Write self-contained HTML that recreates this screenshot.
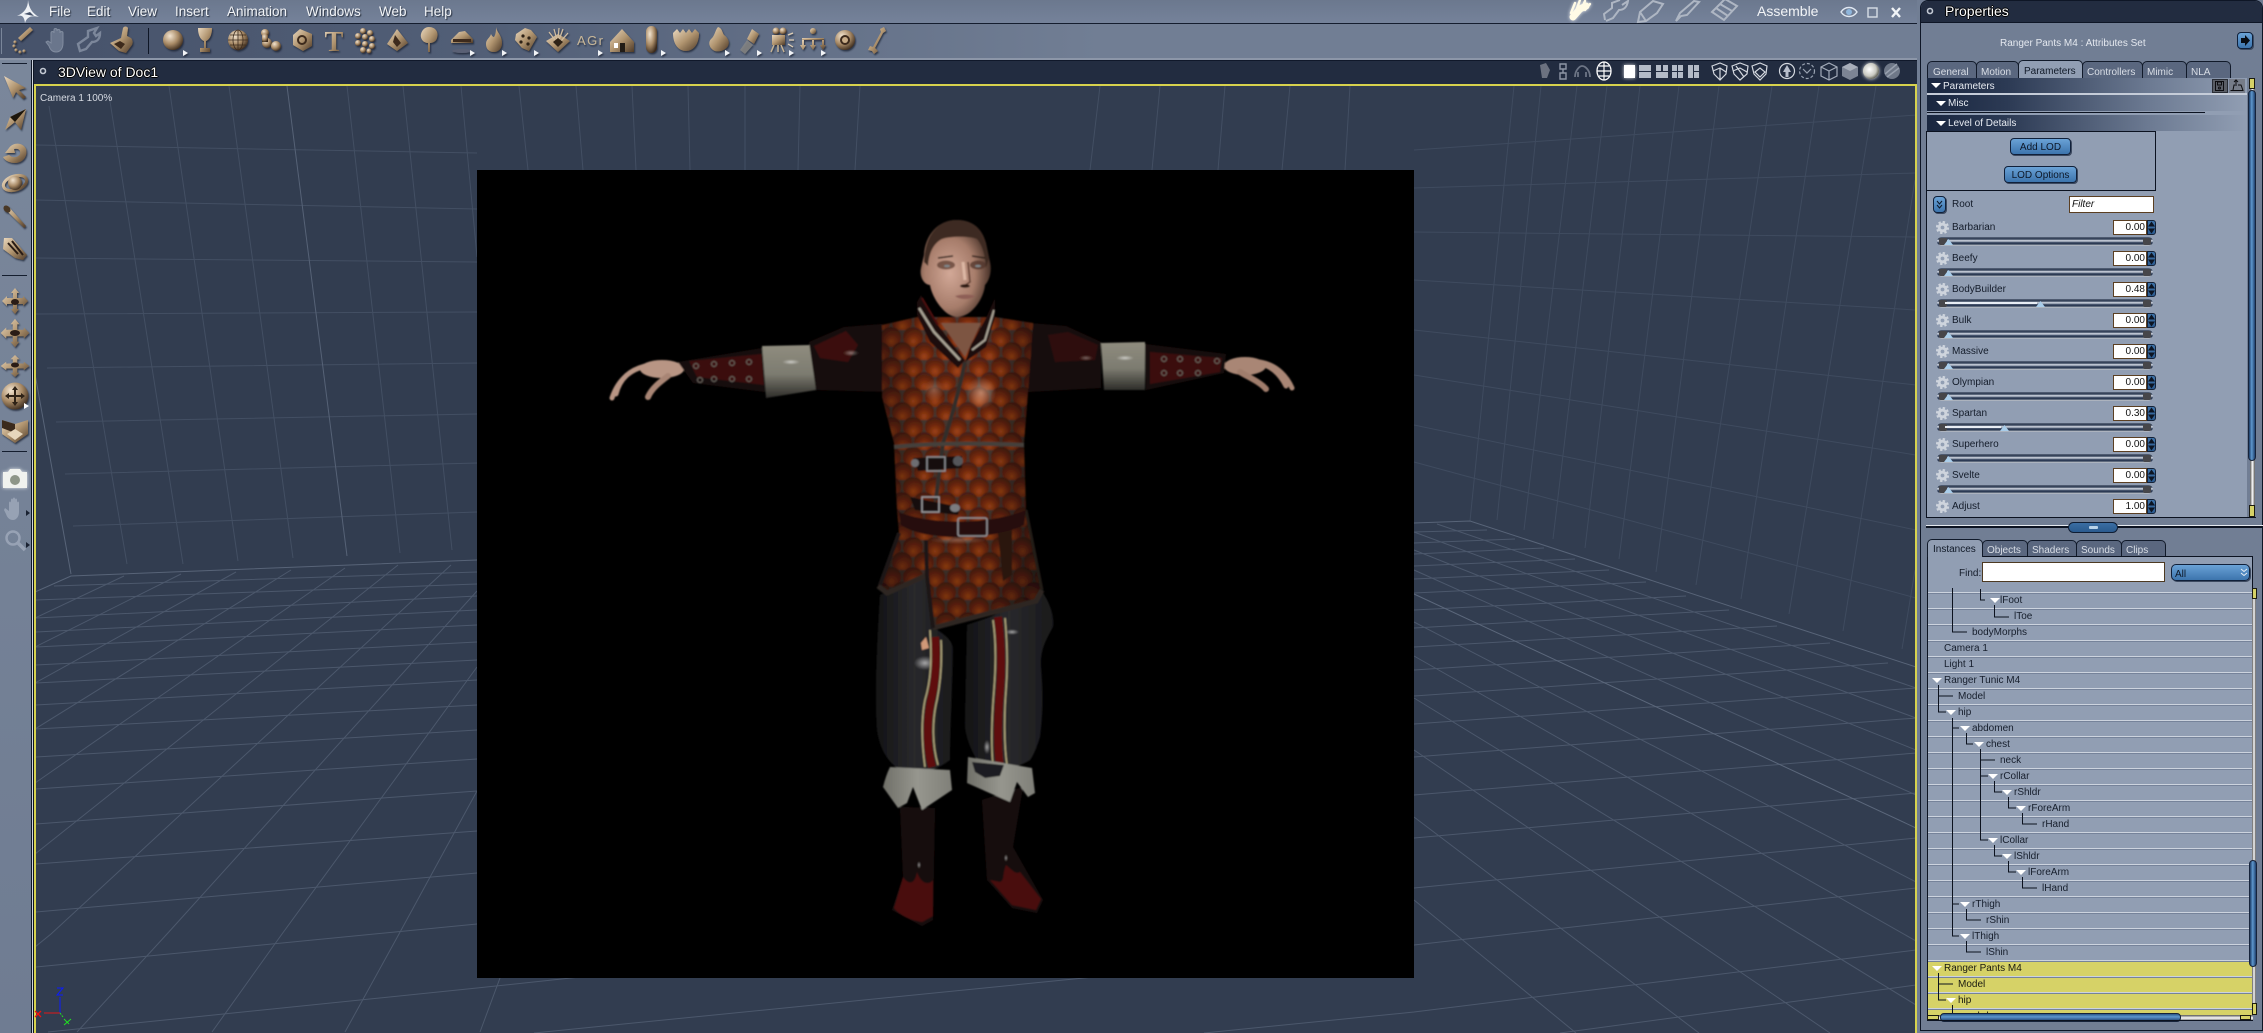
<!DOCTYPE html>
<html><head><meta charset="utf-8"><title>Carrara</title>
<style>
html,body{margin:0;padding:0;background:#717e94}
#r{position:relative;width:2263px;height:1033px;overflow:hidden;background:#717e94;font-family:"Liberation Sans",sans-serif}
#r div,#r span,#r svg{position:absolute}
.m{top:2px;font-size:13.5px;line-height:19px;color:#f2f4f7;text-shadow:1px 1px 1px #27303f;white-space:nowrap}
.t{font-size:10px;line-height:16px;white-space:nowrap;color:#141c2a}
.w{color:#fff;font-size:14px;line-height:18px;white-space:nowrap;text-shadow:-1px 0 0 #000,1px 0 0 #000,0 -1px 0 #000,0 1px 0 #000}
.tab{top:61px;height:17px;background:#5a677f;border:1px solid #111a2a;border-bottom:0;border-radius:5px 5px 0 0;box-sizing:border-box;color:#d9dee6;font-size:10px;line-height:21px;padding-left:4px;white-space:nowrap}
.tab.a{background:#919eb3;color:#111a28;top:60px;height:18px;z-index:2;padding-left:5px}
.hd{left:1927px;height:16px;background:linear-gradient(90deg,#1a2740 0,#2c3a54 25%,#6d7b93 70%,#919eb3 100%);color:#e8ecf2;font-size:10px;line-height:16px;white-space:nowrap}
.tri{width:0;height:0;border-left:5px solid transparent;border-right:5px solid transparent;border-top:5px solid #fff}
.btn{background:linear-gradient(#6aa2d6,#3c74ad);border:1px solid #10203a;border-radius:4px;box-shadow:1px 1px 0 #3d4a60;color:#0d1828;font-size:10px;text-align:center;box-sizing:border-box;line-height:17px}
.in{left:2113px;width:34px;height:15px;background:#fff;border:1px solid #5b3f22;box-sizing:border-box;font-size:10px;line-height:14px;text-align:right;padding-right:1px;color:#111}
.sp{left:2147px;width:9px;height:15px;background:linear-gradient(#3f73a8,#2c5b90);border-radius:0 3px 3px 0;border:1px solid #142238;box-sizing:border-box}
.sl{left:1937px;width:216px;height:9px;border-radius:5px;background:linear-gradient(#5a667b 0,#2a3850 22%,#d7dde8 42%,#1e2e4a 66%,#39465c 78%,#d3d8e0 100%)}
.cap{width:8px;height:7px;top:1px;background:#46464a;border-radius:2px}
.f{left:8px;top:3px;height:2px;background:#e8edf4}
.th{top:2px;width:9px;height:6px;background:#a9cdea;clip-path:polygon(50% 0,100% 100%,0 100%)}
#tree{left:1928px;top:592px;width:324px;height:424px;overflow:hidden;background:#919eb3}
#tree div{position:absolute;left:0;width:324px;height:16px;box-sizing:border-box;border-top:1px solid #ccd3de;box-shadow:inset 0 1px 0 #76839a;font-size:10px;line-height:16px;color:#161e2c;white-space:nowrap}
#tree div.y{background:#d6d267;color:#1a1a10}
#tree span.n{position:absolute;top:0}
#tree span.tr{position:absolute;top:5px;width:0;height:0;border-left:5px solid transparent;border-right:5px solid transparent;border-top:5px solid #fff}
</style></head><body>
<div id="r">
<!-- title bar -->
<div style="left:0;top:0;width:1919px;height:23px;background:linear-gradient(#6b788e,#75829a)"></div>
<div style="left:0;top:23px;width:1919px;height:1px;background:#141d2e"></div>
<div style="left:0;top:24px;width:1919px;height:34px;background:linear-gradient(90deg,#46526a 0,#525f77 500px,#66738a 850px,#717e94 1100px)"></div>
<div style="left:0;top:58px;width:1919px;height:2px;background:#8c96a8"></div>
<div class="m" style="left:49px">File</div><div class="m" style="left:87px">Edit</div><div class="m" style="left:128px">View</div><div class="m" style="left:175px">Insert</div><div class="m" style="left:227px">Animation</div><div class="m" style="left:306px">Windows</div><div class="m" style="left:379px">Web</div><div class="m" style="left:424px">Help</div>
<div class="m" style="left:1757px;font-size:14px;top:2px;text-shadow:none">Assemble</div>
<!-- left toolbar -->
<div style="left:0;top:60px;width:31px;height:973px;background:linear-gradient(#7a879b,#6f7c92)"></div>
<div style="left:31px;top:60px;width:1px;height:973px;background:#0f1726"></div>
<div style="left:32px;top:60px;width:1px;height:973px;background:#cfd5de"></div>
<div style="left:33px;top:60px;width:1px;height:973px;background:#0f1726"></div>
<!-- 3D title -->
<div style="left:34px;top:60px;width:1885px;height:24px;background:#222c40;border-top:1px solid #10182a;box-sizing:border-box"></div>
<div class="w" style="left:58px;top:63px">3DView of Doc1</div>
<!-- viewport -->
<div style="left:34px;top:84px;width:1883px;height:949px;background:#323d50;box-shadow:inset 0 2px 0 #d7d24d,inset 2px 0 0 #d7d24d,inset -2px 0 0 #d7d24d"></div>
<svg style="left:36px;top:86px" width="1879" height="947" viewBox="36 86 1879 947" fill="none" stroke="#4c586c" stroke-width="1">
<g stroke="#434f63">
<path d="M49 106L127 564M109 95L183 564M169 86L238 561M229 86L293 558M347 86L400 553M403 86L452 550M461 86L477 257M519 86L528 170M576 86L583 170M632 86L636 170M688 86L690 170M745 86L745 170M800 86L798 170M860 86L855 170M1100 86L1090 170M1160 86L1152 170M1225 86L1218 170M1290 86L1282 170M1350 86L1345 170"/>
<path d="M36 145L477 153M36 200L477 209M36 258L477 262M36 314L477 312M47 368L477 363M56 422L477 414M65 474L477 463M73 526L477 512"/>
</g>
<g stroke="#3f4b5f">
<path d="M1514 86L1470 521M1541 86L1497 520M1577 86L1524 530M1607 86L1553 539M1640 86L1585 548M1679 86L1619 559M1719 86L1656 572M1772 86L1696 585M1819 86L1741 599M1876 86L1789 614M1915 180L1843 631M1915 570L1902 649"/>
<path d="M1414 462L1916 598M1414 425L1916 530M1414 375L1916 455M1414 330L1916 385M1414 280L1916 310M1414 232L1916 237M1414 188L1916 173M1414 150L1916 115"/>
</g>
<path stroke="#566276" d="M287 86L347 556"/>
<path stroke="#586478" d="M35 374L71 574M35 592L71 576L477 560L1414 523L1470 521L1916 667"/>
<path d="M54 586L477 572L1414 532L1487 530M36 600L477 584L1414 543L1515 539M36 618L477 596L1414 554L1544 548M36 632L477 610L1414 566L1575 559M36 647L477 625L1414 579L1609 570M36 665L477 642L1414 593L1646 582M36 683L477 660L1414 610L1686 596M36 705L477 680L1414 628L1729 610M36 729L477 705L1414 647L1777 626M36 757L477 730L1414 670L1830 643M36 789L477 759L1414 696L1888 663M36 824L477 791L1414 724L1916 688M36 864L477 831L1414 757L1916 718M36 912L477 873L1414 795L1916 753M36 967L477 924L1414 838L1916 793M48 1032L477 988L1414 888L1916 838M534 1033L1414 945L1916 888M1204 1033L1414 1012L1916 950M1560 1033L1916 985"/>
<path d="M35 618L124 576M35 647L181 574M35 683L236 572M35 729L291 570M35 783L345 568M35 854L398 565M35 947L51 934L451 565M77 1032L167 934L477 591M212 1032L282 934L477 667M345 1032L399 934L477 791M480 1032L500 978"/>
<path d="M1437 524L1916 688M1414 532L1916 718M1414 550L1916 750M1414 570L1916 795M1414 622L1916 882M1414 656L1916 941M1414 698L1916 1005M1414 750L1830 1033M1414 817L1699 1033M1414 900L1576 1033"/>
<path stroke="#5b677b" d="M1414 594L1916 828"/>
</svg>
<div class="t" style="left:40px;top:91px;color:#d6dae2">Camera 1 100%</div>
<!-- axis -->
<svg style="left:34px;top:980px" width="60" height="53" viewBox="34 980 60 53" fill="none">
<path d="M60 1013V997" stroke="#0a1cff" stroke-width="1"/>
<path d="M60 1013H44" stroke="#e01818" stroke-width="1"/>
<path d="M60 1013L63 1017" stroke="#22dd22" stroke-width="1" stroke-dasharray="2 1"/>
<path d="M57 988H63L57 995H63" stroke="#0a1cff" stroke-width="1"/>
<path d="M35 1011L41 1017M41 1011L35 1017" stroke="#f01010" stroke-width="1.3"/>
<path d="M64 1019L69 1024M71 1019L64 1025" stroke="#22e022" stroke-width="1"/>
</svg>
<!-- render -->
<svg style="left:477px;top:170px" width="937" height="808" viewBox="477 170 937 808">
<defs>
<radialGradient id="sc" cx=".5" cy=".72" r=".7"><stop offset="0" stop-color="#ab4817"/><stop offset=".5" stop-color="#782a0e"/><stop offset="1" stop-color="#4a2015"/></radialGradient>
<pattern id="scp" width="22" height="30" patternUnits="userSpaceOnUse">
<rect width="22" height="30" fill="#4a3a32"/>
<ellipse cx="11" cy="7" rx="10.2" ry="10" fill="url(#sc)"/><ellipse cx="0" cy="22" rx="10.2" ry="10" fill="url(#sc)"/><ellipse cx="22" cy="22" rx="10.2" ry="10" fill="url(#sc)"/><ellipse cx="11" cy="37" rx="10.2" ry="10" fill="url(#sc)"/>
</pattern>
<linearGradient id="shd" x1="0" x2="1" y1="0" y2="0"><stop offset="0" stop-color="#000" stop-opacity=".5"/><stop offset=".3" stop-color="#000" stop-opacity=".05"/><stop offset=".62" stop-color="#000" stop-opacity="0"/><stop offset="1" stop-color="#000" stop-opacity=".55"/></linearGradient>
<linearGradient id="shv" x1="0" x2="0" y1="0" y2="1"><stop offset="0" stop-color="#000" stop-opacity="0"/><stop offset=".6" stop-color="#000" stop-opacity=".1"/><stop offset="1" stop-color="#000" stop-opacity=".3"/></linearGradient>
<linearGradient id="sleeve" x1="0" x2="0" y1="0" y2="1"><stop offset="0" stop-color="#8f8c7e"/><stop offset=".55" stop-color="#7c7b70"/><stop offset="1" stop-color="#2e2d29"/></linearGradient>
<linearGradient id="pant" x1="0" x2="1" y1="0" y2="0"><stop offset="0" stop-color="#131315"/><stop offset=".5" stop-color="#29292c"/><stop offset="1" stop-color="#19191b"/></linearGradient>
<linearGradient id="cuff" x1="0" x2="1" y1="0" y2="0"><stop offset="0" stop-color="#6f6f68"/><stop offset=".5" stop-color="#96968e"/><stop offset="1" stop-color="#7f7f78"/></linearGradient>
<radialGradient id="face" cx=".42" cy=".55" r=".6"><stop offset="0" stop-color="#d2a897"/><stop offset=".6" stop-color="#a67c6a"/><stop offset="1" stop-color="#3f2b22"/></radialGradient>
<radialGradient id="glow"><stop offset="0" stop-color="#fff" stop-opacity=".6"/><stop offset="1" stop-color="#fff" stop-opacity="0"/></radialGradient>
<radialGradient id="glowO"><stop offset="0" stop-color="#f6c0a0" stop-opacity=".6"/><stop offset="1" stop-color="#f6c0a0" stop-opacity="0"/></radialGradient>
<filter id="bl"><feGaussianBlur stdDeviation=".9"/></filter>
<clipPath id="torso"><path d="M882 325L917 317L995 317L1033 323L1028 393L1024 443L1026 510L1042 590L1036 601L933 628L927 575L887 593L878 586L899 533L897 510L894 443L882 397Z"/></clipPath>
</defs>
<rect x="477" y="170" width="937" height="808" fill="#000"/>
<g filter="url(#bl)">
<!-- legs -->
<path d="M880 595L927 577L933 627C945 635 953 640 953 650C952 700 950 730 950 760C935 772 915 775 900 770C888 762 880 750 877 730C875 700 876 660 880 595Z" fill="url(#pant)"/>
<path d="M967 625L990 617L1043 593C1048 600 1055 615 1053 627C1046 640 1040 650 1041 667C1044 700 1042 720 1040 737C1036 750 1032 758 1030 760C1015 770 990 772 977 760C968 745 964 730 965 720Z" fill="url(#pant)"/>
<ellipse cx="925" cy="663" rx="11" ry="7" fill="url(#glow)"/><ellipse cx="1012" cy="632" rx="7" ry="2.5" fill="url(#glow)"/><ellipse cx="987" cy="747" rx="3" ry="7" fill="url(#glow)"/>
<path d="M935 637C937 660 936 680 931 700C927 720 926 745 932 767" stroke="#5e110f" stroke-width="8" fill="none"/>
<path d="M930 630C932 660 931 680 925 700C921 720 922 745 925 767M941 640C942 660 941 680 937 700C932 720 932 745 938 765" stroke="#aca278" stroke-width="1.6" fill="none"/>
<path d="M998 617C1001 640 1002 665 1000 690C998 715 997 745 1000 767" stroke="#5e110f" stroke-width="8" fill="none"/>
<path d="M993 620C996 640 996 665 994 690C992 715 991 745 993 765M1005 618C1007 640 1008 665 1006 690C1004 715 1004 745 1007 765" stroke="#aca278" stroke-width="1.6" fill="none"/>
<path d="M926 637L929 648L922 650L921 643Z" fill="#d09878"/>
<!-- boots -->
<path d="M900 807L935 808L933 920L922 926L892 910L903 877Z" fill="#170f0e"/>
<path d="M982 800L1023 787L1013 847L1043 900L1037 913L1012 908L987 880Z" fill="#170f0e"/>
<path d="M903 877C908 885 915 885 917 872C921 885 930 885 933 880L933 916L922 922C910 920 900 916 894 908Z" fill="#48100b"/>
<path d="M1006 865C1002 875 1005 880 1000 882L990 880L1012 905L1036 910L1041 899L1020 872C1016 875 1012 870 1006 865Z" fill="#48100b"/>
<ellipse cx="919" cy="865" rx="1.5" ry="3.5" fill="url(#glow)"/><ellipse cx="1006" cy="858" rx="1.5" ry="3.5" fill="url(#glow)"/>
<!-- cuffs -->
<path d="M883 787Q886 775 890 767L950 770L952 790L922 810L913 787L907 803L898 808Z" fill="url(#cuff)"/>
<path d="M968 757L1032 768L1035 793L1028 797L1017 782L1010 802L967 783Z" fill="url(#cuff)"/>
<path d="M972 762L1004 765L1000 776L985 778L975 772Z" fill="#1f1f20"/>
<!-- left arm -->
<ellipse cx="662" cy="369" rx="22" ry="9" fill="#b89584"/>
<path d="M652 366C632 366 618 380 612 398M645 366C630 370 620 378 616 394" fill="none" stroke="#b89584" stroke-width="5" stroke-linecap="round"/>
<path d="M668 376C660 382 652 388 648 397" fill="none" stroke="#a88574" stroke-width="6" stroke-linecap="round"/>
<path d="M678 362L762 348L765 392L693 383Z" fill="#170d0b"/>
<path d="M689 361L762 354L764 385L697 377Z" fill="#3a0d08"/>
<g fill="none" stroke="#6d6760" stroke-width="1"><circle cx="696" cy="366" r="2.5"/><circle cx="714" cy="364" r="2.5"/><circle cx="732" cy="363" r="2.5"/><circle cx="749" cy="362" r="2.5"/><circle cx="700" cy="380" r="2.5"/><circle cx="714" cy="379" r="2.5"/><circle cx="732" cy="379" r="2.5"/><circle cx="749" cy="379" r="2.5"/></g>
<path d="M762 346L811 345L816 390L766 398Z" fill="url(#sleeve)"/>
<ellipse cx="791" cy="362" rx="9" ry="2.5" fill="url(#glow)"/>
<path d="M809 342L844 327L882 324L890 392L816 390Z" fill="#180c0a"/>
<path d="M814 346L846 331L858 345L848 362L820 358Z" fill="#3a100c"/>
<ellipse cx="851" cy="353" rx="8" ry="3" fill="url(#glow)" opacity=".7"/>
<!-- right arm -->
<ellipse cx="1245" cy="366" rx="21" ry="9" fill="#a98675"/>
<path d="M1250 362C1270 360 1285 372 1292 388M1256 363C1270 364 1280 374 1286 386" fill="none" stroke="#a98675" stroke-width="5" stroke-linecap="round"/>
<path d="M1240 372C1250 378 1260 382 1266 389" fill="none" stroke="#a07d6c" stroke-width="6" stroke-linecap="round"/>
<path d="M1145 344L1226 354L1224 373L1146 390Z" fill="#170d0b"/>
<path d="M1150 352L1222 358L1220 372L1150 384Z" fill="#3a0d08"/>
<g fill="none" stroke="#6d6760" stroke-width="1"><circle cx="1164" cy="359" r="2.5"/><circle cx="1180" cy="359" r="2.5"/><circle cx="1198" cy="360" r="2.5"/><circle cx="1217" cy="361" r="2.5"/><circle cx="1164" cy="373" r="2.5"/><circle cx="1180" cy="373" r="2.5"/><circle cx="1198" cy="373" r="2.5"/></g>
<path d="M1101 343L1145 342L1145 390L1104 390Z" fill="url(#sleeve)"/>
<ellipse cx="1125" cy="358" rx="9" ry="2.5" fill="url(#glow)"/>
<path d="M1030 323L1066 326L1101 342L1101 388L1028 392Z" fill="#180c0a"/>
<path d="M1048 335L1068 332L1098 345L1095 360L1055 362Z" fill="#2e0e0a"/>
<ellipse cx="1086" cy="358" rx="7" ry="2.5" fill="url(#glow)" opacity=".6"/>
<!-- torso -->
<g clip-path="url(#torso)">
<rect x="870" y="310" width="180" height="325" fill="url(#scp)"/>
<rect x="870" y="310" width="180" height="325" fill="url(#shd)"/>
<rect x="870" y="310" width="180" height="325" fill="url(#shv)"/>
<ellipse cx="981" cy="393" rx="15" ry="16" fill="url(#glowO)"/><ellipse cx="934" cy="390" rx="10" ry="11" fill="url(#glowO)" opacity=".6"/><ellipse cx="958" cy="540" rx="28" ry="4" fill="url(#glowO)" opacity=".6"/>
</g>
<path d="M878 586L887 593L927 575M933 628L1036 601L1042 590" fill="none" stroke="#2e2622" stroke-width="5"/>
<path d="M899 533L880 585M927 575L926 540M933 628L927 575" fill="none" stroke="#1e1815" stroke-width="4"/>
<path d="M1026 510L1042 590" fill="none" stroke="#241d19" stroke-width="3"/>
<path d="M965 362C958 395 951 420 943 443C941 460 938 480 936 500" fill="none" stroke="#332e2a" stroke-width="4"/>
<path d="M894 447C930 443 985 443 1024 445" fill="none" stroke="#45403a" stroke-width="4"/>
<!-- buckles -->
<path d="M913 458L962 456L962 468L918 471Z" fill="#13100e"/>
<ellipse cx="915" cy="463" rx="4" ry="4" fill="#6d6e72"/><ellipse cx="958" cy="461" rx="5" ry="5" fill="#55565a"/>
<rect x="927" y="457" width="18" height="14" fill="none" stroke="#8d8e92" stroke-width="1.5"/>
<path d="M910 497L925 500L960 507L958 515L915 510Z" fill="#13100e"/>
<rect x="922" y="497" width="17" height="15" fill="none" stroke="#9a9a9e" stroke-width="1.5"/>
<ellipse cx="955" cy="508" rx="5" ry="4" fill="#7c7c80"/>
<!-- belt -->
<path d="M899 512C930 525 990 525 1026 510L1024 525C995 540 925 542 901 525Z" fill="#26110f"/>
<rect x="958" y="518" width="29" height="18" rx="2" fill="none" stroke="#8e8e92" stroke-width="1.6"/>
<path d="M998 533L1012 530L1012 575L1003 581Z" fill="#2a1310"/>
<!-- collar -->
<path d="M941 323L981 323L965 357Z" fill="#7d5543"/>
<path d="M917 302L921 295L934 320L965 360L958 368L930 342L917 315Z" fill="#1a0908"/>
<path d="M919 308L934 332L960 360" fill="none" stroke="#a9a294" stroke-width="2.5"/>
<path d="M922 298L938 325" fill="none" stroke="#4d100c" stroke-width="2"/>
<path d="M995 298L995 317L986 347L965 362L971 345L985 320Z" fill="#1a0908"/>
<path d="M994 310L985 340L972 350" fill="none" stroke="#a9a294" stroke-width="2"/>
<!-- head -->
<path d="M957 220C938 220 925 235 924 255L921 268C919 278 925 285 930 285C932 298 945 317 957 317C972 317 984 298 985 285C990 280 992 270 990 262L986 243C982 228 972 220 957 220Z" fill="url(#face)"/>
<path d="M957 220C938 220 925 235 924 262L928 266C929 252 934 243 942 239C950 236 970 236 977 239C983 246 985 256 986 268L989 258C984 232 972 220 957 220Z" fill="#3e2b20"/>
<ellipse cx="946" cy="265" rx="9" ry="4.5" fill="#5e3d32" opacity=".75"/><ellipse cx="978" cy="265" rx="8" ry="4.5" fill="#4f3329" opacity=".75"/>
<path d="M938 258L953 256M972 256L985 258" stroke="#2b1c16" stroke-width="1.5"/>
<ellipse cx="947" cy="266" rx="3" ry="1.2" fill="#80878a"/><ellipse cx="978" cy="266" rx="3" ry="1.2" fill="#80878a"/>
<path d="M963 262L965 280" stroke="#dcb7a4" stroke-width="3"/>
<path d="M968 262L970 282L964 286" fill="none" stroke="#5e3b2e" stroke-width="1.6"/>
<ellipse cx="965" cy="286" rx="5" ry="1.8" fill="#2a1711"/>
<path d="M955 296C962 294 970 294 975 296C970 300 960 300 955 296Z" fill="#8e5f56"/>
</g>
</svg>
<!-- properties panel -->
<div style="left:1917px;top:0;width:3px;height:1033px;background:#717e94"></div>
<div style="left:1920px;top:0;width:343px;height:1031px;background:#717e94;border:1px solid #0e1626;border-radius:8px 8px 0 0;box-sizing:border-box"></div>
<div style="left:1921px;top:1px;width:341px;height:21px;background:#222c40;border-radius:7px 7px 0 0;border-bottom:1px solid #0e1626"></div>
<div class="w" style="left:1945px;top:2px">Properties</div>
<div class="t" style="left:2000px;top:36px;color:#e4e8ef">Ranger Pants M4 : Attributes Set</div>
<div class="tab" style="left:1927px;width:50px;padding-left:5px">General</div>
<div class="tab" style="left:1976px;width:43px;padding-left:4px">Motion</div>
<div class="tab a" style="left:2018px;width:65px">Parameters</div>
<div class="tab" style="left:2082px;width:61px">Controllers</div>
<div class="tab" style="left:2142px;width:45px">Mimic</div>
<div class="tab" style="left:2186px;width:45px">NLA</div>
<div style="left:1927px;top:78px;width:320px;height:439px;background:#919eb3"></div>
<div class="hd" style="top:78px;width:320px"><span class="t" style="left:16px;top:1px;color:#e8ecf2">Parameters</span></div>
<div style="left:1927px;top:93px;width:320px;height:2px;background:#c5ccd8"></div>
<div class="hd" style="top:95px;width:320px;height:16px"><span class="t" style="left:21px;top:1px;color:#e8ecf2">Misc</span></div>
<div style="left:1927px;top:112px;width:278px;height:1px;background:#0b1220"></div>
<div class="hd" style="top:115px;width:320px"><span class="t" style="left:21px;top:1px;color:#e8ecf2">Level of Details</span></div>
<div class="tri" style="left:1931px;top:83px"></div><div class="tri" style="left:1936px;top:101px"></div><div class="tri" style="left:1936px;top:121px"></div>
<div style="left:1927px;top:131px;width:229px;height:60px;border:1px solid #0b1220;border-left:0;box-sizing:border-box"></div>
<div class="btn" style="left:2010px;top:138px;width:61px;height:17px">Add LOD</div>
<div class="btn" style="left:2004px;top:166px;width:73px;height:17px">LOD Options</div>
<div class="btn" style="left:1933px;top:196px;width:13px;height:17px"></div>
<svg style="left:1933px;top:196px" width="13" height="17" fill="none" stroke="#0d1828"><path d="M4 5L6.5 8L9 5M4 9L6.5 12L9 9"/></svg>
<div class="t" style="left:1952px;top:197px">Root</div>
<div style="left:2069px;top:196px;width:85px;height:17px;background:#fff;border:1px solid #5b3f22;box-sizing:border-box;font:italic 10px/16px 'Liberation Sans',sans-serif;padding-left:2px;color:#111">Filter</div>
<div style="left:2212px;top:79px;width:16px;height:14px;background:#5a5e66;border:1px solid #2a2e36;box-sizing:border-box"></div>
<div style="left:2229px;top:79px;width:16px;height:14px;background:#767c88"></div>
<svg style="left:2212px;top:79px" width="34" height="14" fill="none" stroke="#0d0d10"><rect x="3.5" y="2.5" width="8" height="9"/><rect x="5.5" y="3" width="4" height="3"/><circle cx="7.5" cy="9" r="1"/><path d="M18.5 11.5H31L29 6H26M21 11L22 6H25M24 5V1M22 3L24 1L26 3"/></svg>
<!-- param rows -->
<svg width="0" height="0" style="left:0;top:0"><defs><g id="gear"><circle cx="6.5" cy="6.5" r="3.4" fill="none" stroke="#ced4dd" stroke-width="3"/><circle cx="6.5" cy="6.5" r="5.6" fill="none" stroke="#ced4dd" stroke-width="2" stroke-dasharray="2.4 2"/></g><path id="sa" d="M3.5 0.5L7 5.5H0ZM0 7.5H7L3.5 12.5Z" fill="#0c1422"/></defs></svg>
<div id="pr" style="left:0;top:0;width:2263px;height:517px;overflow:hidden">
<svg style="left:1936px;top:221px" width="13" height="13"><use href="#gear"/></svg><div class="t" style="left:1952px;top:220px">Barbarian</div><div class="in" style="top:220px">0.00</div><div class="sp" style="top:220px"></div><svg style="left:2148px;top:221px" width="7" height="13"><use href="#sa"/></svg><div class="sl" style="top:237px"><i class="cap" style="position:absolute;left:2px"></i><i class="cap" style="position:absolute;right:2px"></i><i class="th" style="position:absolute;left:7px"></i></div>
<svg style="left:1936px;top:252px" width="13" height="13"><use href="#gear"/></svg><div class="t" style="left:1952px;top:251px">Beefy</div><div class="in" style="top:251px">0.00</div><div class="sp" style="top:251px"></div><svg style="left:2148px;top:252px" width="7" height="13"><use href="#sa"/></svg><div class="sl" style="top:268px"><i class="cap" style="position:absolute;left:2px"></i><i class="cap" style="position:absolute;right:2px"></i><i class="th" style="position:absolute;left:7px"></i></div>
<svg style="left:1936px;top:283px" width="13" height="13"><use href="#gear"/></svg><div class="t" style="left:1952px;top:282px">BodyBuilder</div><div class="in" style="top:282px">0.48</div><div class="sp" style="top:282px"></div><svg style="left:2148px;top:283px" width="7" height="13"><use href="#sa"/></svg><div class="sl" style="top:299px"><i class="cap" style="position:absolute;left:2px"></i><i class="cap" style="position:absolute;right:2px"></i><i class="f" style="position:absolute;width:92px"></i><i class="th" style="position:absolute;left:99px"></i></div>
<svg style="left:1936px;top:314px" width="13" height="13"><use href="#gear"/></svg><div class="t" style="left:1952px;top:313px">Bulk</div><div class="in" style="top:313px">0.00</div><div class="sp" style="top:313px"></div><svg style="left:2148px;top:314px" width="7" height="13"><use href="#sa"/></svg><div class="sl" style="top:330px"><i class="cap" style="position:absolute;left:2px"></i><i class="cap" style="position:absolute;right:2px"></i><i class="th" style="position:absolute;left:7px"></i></div>
<svg style="left:1936px;top:345px" width="13" height="13"><use href="#gear"/></svg><div class="t" style="left:1952px;top:344px">Massive</div><div class="in" style="top:344px">0.00</div><div class="sp" style="top:344px"></div><svg style="left:2148px;top:345px" width="7" height="13"><use href="#sa"/></svg><div class="sl" style="top:361px"><i class="cap" style="position:absolute;left:2px"></i><i class="cap" style="position:absolute;right:2px"></i><i class="th" style="position:absolute;left:7px"></i></div>
<svg style="left:1936px;top:376px" width="13" height="13"><use href="#gear"/></svg><div class="t" style="left:1952px;top:375px">Olympian</div><div class="in" style="top:375px">0.00</div><div class="sp" style="top:375px"></div><svg style="left:2148px;top:376px" width="7" height="13"><use href="#sa"/></svg><div class="sl" style="top:392px"><i class="cap" style="position:absolute;left:2px"></i><i class="cap" style="position:absolute;right:2px"></i><i class="th" style="position:absolute;left:7px"></i></div>
<svg style="left:1936px;top:407px" width="13" height="13"><use href="#gear"/></svg><div class="t" style="left:1952px;top:406px">Spartan</div><div class="in" style="top:406px">0.30</div><div class="sp" style="top:406px"></div><svg style="left:2148px;top:407px" width="7" height="13"><use href="#sa"/></svg><div class="sl" style="top:423px"><i class="cap" style="position:absolute;left:2px"></i><i class="cap" style="position:absolute;right:2px"></i><i class="f" style="position:absolute;width:56px"></i><i class="th" style="position:absolute;left:63px"></i></div>
<svg style="left:1936px;top:438px" width="13" height="13"><use href="#gear"/></svg><div class="t" style="left:1952px;top:437px">Superhero</div><div class="in" style="top:437px">0.00</div><div class="sp" style="top:437px"></div><svg style="left:2148px;top:438px" width="7" height="13"><use href="#sa"/></svg><div class="sl" style="top:454px"><i class="cap" style="position:absolute;left:2px"></i><i class="cap" style="position:absolute;right:2px"></i><i class="th" style="position:absolute;left:7px"></i></div>
<svg style="left:1936px;top:469px" width="13" height="13"><use href="#gear"/></svg><div class="t" style="left:1952px;top:468px">Svelte</div><div class="in" style="top:468px">0.00</div><div class="sp" style="top:468px"></div><svg style="left:2148px;top:469px" width="7" height="13"><use href="#sa"/></svg><div class="sl" style="top:485px"><i class="cap" style="position:absolute;left:2px"></i><i class="cap" style="position:absolute;right:2px"></i><i class="th" style="position:absolute;left:7px"></i></div>
<svg style="left:1936px;top:500px" width="13" height="13"><use href="#gear"/></svg><div class="t" style="left:1952px;top:499px">Adjust</div><div class="in" style="top:499px">1.00</div><div class="sp" style="top:499px"></div><svg style="left:2148px;top:500px" width="7" height="13"><use href="#sa"/></svg>
</div>
<div style="left:1926px;top:517px;width:330px;height:1px;background:#0b1220"></div>
<div style="left:1926px;top:131px;width:1px;height:386px;background:#0b1220"></div>
<!-- params scrollbar -->
<div style="left:2250px;top:89px;width:5px;height:428px;background:linear-gradient(90deg,#555,#fff 50%,#555)"></div>
<div style="left:2249px;top:78px;width:6px;height:11px;background:#d6d267;border:1px solid #1a1a10;box-sizing:border-box"></div>
<div style="left:2248px;top:90px;width:8px;height:371px;background:linear-gradient(90deg,#1c3c66,#5e97cd 45%,#1e3f6c);border-radius:4px;border:1px solid #16233a;box-sizing:border-box"></div>
<div style="left:2249px;top:505px;width:6px;height:12px;background:#d6d267;border:1px solid #1a1a10;box-sizing:border-box"></div>
<!-- splitter -->
<div style="left:1926px;top:525px;width:337px;height:1px;background:#e4e8ee"></div>
<div style="left:1926px;top:526px;width:337px;height:2px;background:#0b1220"></div>
<div style="left:2068px;top:522px;width:50px;height:11px;background:linear-gradient(#3b6ea3,#2a5a8e);border:1px solid #0f1d33;border-radius:6px;box-sizing:border-box"></div>
<div style="left:2089px;top:526px;width:9px;height:3px;background:#b9d3ea;border-radius:1px"></div>
<!-- lower tabs -->
<div style="left:1927px;top:556px;width:326px;height:464px;background:#919eb3;border:1px solid #0b1220;border-bottom:0;box-sizing:border-box"></div>
<div class="tab a" style="left:1927px;top:539px;width:56px;height:18px;line-height:20px">Instances</div>
<div class="tab" style="left:1982px;top:540px;width:46px;line-height:20px;height:16px">Objects</div>
<div class="tab" style="left:2027px;top:540px;width:50px;line-height:20px;height:16px">Shaders</div>
<div class="tab" style="left:2076px;top:540px;width:46px;line-height:20px;height:16px">Sounds</div>
<div class="tab" style="left:2121px;top:540px;width:45px;line-height:20px;height:16px">Clips</div>
<div class="t" style="left:1959px;top:566px;font-size:10px">Find:</div>
<div style="left:1982px;top:562px;width:183px;height:20px;background:#fff;border:1px solid #4d3a22;box-sizing:border-box"></div>
<div class="btn" style="left:2171px;top:564px;width:79px;height:17px;text-align:left;padding-left:3px;line-height:19px;border-radius:5px">All</div>
<svg style="left:2240px;top:568px" width="8" height="9" fill="none" stroke="#e6eef6"><path d="M1 1L4 3.5L7 1M1 5L4 7.5L7 5"/></svg>
<!-- tree -->
<div id="tree">
<div style="top:0"><span class="tr" style="left:62px"></span><span class="n" style="left:72px">lFoot</span></div>
<div style="top:16px"><span class="n" style="left:86px">lToe</span></div>
<div style="top:32px"><span class="n" style="left:44px">bodyMorphs</span></div>
<div style="top:48px"><span class="n" style="left:16px">Camera 1</span></div>
<div style="top:64px"><span class="n" style="left:16px">Light 1</span></div>
<div style="top:80px"><span class="tr" style="left:4px"></span><span class="n" style="left:16px">Ranger Tunic M4</span></div>
<div style="top:96px"><span class="n" style="left:30px">Model</span></div>
<div style="top:112px"><span class="tr" style="left:18px"></span><span class="n" style="left:30px">hip</span></div>
<div style="top:128px"><span class="tr" style="left:32px"></span><span class="n" style="left:44px">abdomen</span></div>
<div style="top:144px"><span class="tr" style="left:46px"></span><span class="n" style="left:58px">chest</span></div>
<div style="top:160px"><span class="n" style="left:72px">neck</span></div>
<div style="top:176px"><span class="tr" style="left:60px"></span><span class="n" style="left:72px">rCollar</span></div>
<div style="top:192px"><span class="tr" style="left:74px"></span><span class="n" style="left:86px">rShldr</span></div>
<div style="top:208px"><span class="tr" style="left:88px"></span><span class="n" style="left:100px">rForeArm</span></div>
<div style="top:224px"><span class="n" style="left:114px">rHand</span></div>
<div style="top:240px"><span class="tr" style="left:60px"></span><span class="n" style="left:72px">lCollar</span></div>
<div style="top:256px"><span class="tr" style="left:74px"></span><span class="n" style="left:86px">lShldr</span></div>
<div style="top:272px"><span class="tr" style="left:88px"></span><span class="n" style="left:100px">lForeArm</span></div>
<div style="top:288px"><span class="n" style="left:114px">lHand</span></div>
<div style="top:304px"><span class="tr" style="left:32px"></span><span class="n" style="left:44px">rThigh</span></div>
<div style="top:320px"><span class="n" style="left:58px">rShin</span></div>
<div style="top:336px"><span class="tr" style="left:32px"></span><span class="n" style="left:44px">lThigh</span></div>
<div style="top:352px"><span class="n" style="left:58px">lShin</span></div>
<div class="y" style="top:368px"><span class="tr" style="left:4px"></span><span class="n" style="left:16px">Ranger Pants M4</span></div>
<div class="y" style="top:384px"><span class="n" style="left:30px">Model</span></div>
<div class="y" style="top:400px"><span class="tr" style="left:18px"></span><span class="n" style="left:30px">hip</span></div>
<div class="y" style="top:416px"><span class="tr" style="left:32px"></span><span class="n" style="left:44px">abdomen</span></div>
</div>
<svg style="left:1928px;top:586px" width="324" height="430" viewBox="1928 586 324 430" fill="none" stroke="#0c121e" stroke-width="1" shape-rendering="crispEdges">
<path d="M1952.5 588V632H1967M1980.5 589V600H1985M1994.5 605V617H2009M1938.5 685V712H1946M1938.5 696H1953M1952.5 718V936H1959M1952.5 728H1959M1952.5 904H1959M1966.5 733V744H1973M1980.5 749V840H1988M1980.5 760H1995M1980.5 776H1988M1994.5 781V792H2002M2008.5 797V808H2016M2022.5 813V824H2037M1994.5 845V856H2002M2008.5 861V872H2016M2022.5 877V888H2037M1966.5 909V920H1981M1966.5 941V952H1981M1938.5 973V1000H1946M1938.5 984H1953M1952.5 1005V1016"/>
</svg>
<!-- tree scrollbars -->
<div style="left:2252px;top:597px;width:4px;height:410px;background:linear-gradient(90deg,#555,#fff 50%,#555)"></div>
<div style="left:2252px;top:588px;width:5px;height:11px;background:#d6d267;border:1px solid #1a1a10;box-sizing:border-box"></div>
<div style="left:2249px;top:860px;width:8px;height:107px;background:linear-gradient(90deg,#1c3c66,#5e97cd 45%,#1e3f6c);border:1px solid #16233a;border-radius:4px;box-sizing:border-box"></div>
<div style="left:2252px;top:1003px;width:5px;height:12px;background:#d6d267;border:1px solid #1a1a10;box-sizing:border-box"></div>
<div style="left:1927px;top:1015px;width:326px;height:6px;background:linear-gradient(#555,#fff 50%,#555)"></div>
<div style="left:1927px;top:1015px;width:12px;height:5px;background:#d6d267;border:1px solid #1a1a10;box-sizing:border-box"></div>
<div style="left:2240px;top:1015px;width:11px;height:5px;background:#d6d267;border:1px solid #1a1a10;box-sizing:border-box"></div>
<div style="left:1940px;top:1013px;width:241px;height:9px;background:linear-gradient(#2a5686,#5e97cd 40%,#1e3f6c);border:1px solid #16233a;border-radius:4px;box-sizing:border-box"></div>
<div style="left:1927px;top:1020px;width:326px;height:1px;background:#0b1220"></div>
<!-- arrow button -->
<div class="btn" style="left:2237px;top:32px;width:16px;height:17px"></div>
<svg style="left:2237px;top:32px" width="16" height="17"><path d="M4 6H8V3L13 8.5L8 14V11H4Z" fill="#070c14"/></svg>
<!-- circles -->
<svg style="left:0;top:0" width="2263" height="1033" fill="none">
<circle cx="43" cy="71" r="2.5" stroke="#c3c9d3" stroke-width="1.6"/><circle cx="1930" cy="11" r="2.5" stroke="#c3c9d3" stroke-width="1.6"/>
</svg>
<!-- ICONS -->
<svg style="left:0;top:0" width="2263" height="1033" viewBox="0 0 2263 1033">
<defs>
<linearGradient id="tan" x1="0" y1="0" x2="1" y2="1"><stop offset="0" stop-color="#ead8be"/><stop offset=".5" stop-color="#b0946f"/><stop offset="1" stop-color="#4e3a28"/></linearGradient>
<radialGradient id="sph" cx=".35" cy=".3" r=".75"><stop offset="0" stop-color="#f2e4d0"/><stop offset=".55" stop-color="#a88a66"/><stop offset="1" stop-color="#3c2c1e"/></radialGradient>
<radialGradient id="wsph" cx=".4" cy=".4" r=".6"><stop offset="0" stop-color="#fff"/><stop offset=".7" stop-color="#c8c8c0"/><stop offset="1" stop-color="#6a6a60"/></radialGradient>
<filter id="ds" x="-30%" y="-30%" width="170%" height="170%"><feDropShadow dx="1" dy="1.5" stdDeviation=".8" flood-color="#1a2030" flood-opacity=".75"/></filter>
<filter id="gl" x="-40%" y="-40%" width="180%" height="180%"><feDropShadow dx="0" dy="0" stdDeviation="1.8" flood-color="#fff" flood-opacity=".85"/></filter>
</defs>
<!-- logo -->
<path d="M28 0C28 8 24 13 17 16C22 15 24 16 25 23C27 17 31 15 39 17C32 13 29 8 28 0Z" fill="#eef1f5"/>
<path d="M24 14L30 12L34 16Z" fill="#46536b"/>
<!-- toolbar sep -->
<rect x="148" y="28" width="1" height="26" fill="#0e1626"/>
<rect x="1" y="28" width="1" height="26" fill="#7a869a"/>
<!-- ghost icons -->
<g transform="translate(57,40)" fill="#6a768c" stroke="#818c9f" stroke-width="1">
<path d="M-9 1L-6 3V-7C-6-9-3-9-3-7V-10C-3-12 0-12 0-10V-9C0-11 3-11 3-9V-7C3-9 6-9 6-7V3C6 9 3 12-1 12C-5 12-7 9-8 6L-11 2Z"/>
</g>
<g transform="translate(89,40)" fill="none" stroke="#7c879b" stroke-width="2.4">
<path d="M-9 11L-11 4L-1-3L-1-9L8-12L5-7L7-4L11-7C11-1 8 2 3 2L-3 9Z"/>
</g>
<g filter="url(#ds)">
<g transform="translate(22,40)" fill="url(#tan)"><path d="M-4-2L8-13L11-10L-1 1Z"/><circle cx="-7" cy="2" r="1.5"/><circle cx="-8" cy="6" r="1.5"/><circle cx="-6" cy="10" r="1.5"/><circle cx="-2" cy="12" r="1.5"/><circle cx="2" cy="11" r="1.5"/></g>
<g transform="translate(122,40)" fill="url(#tan)"><path d="M-12 3L-1-2L1-12C2-14 5-14 6-12L5-4L9-2C11 0 11 3 10 5L4 13L-3 11ZM-12 3L-3 11"/><path d="M-8 4L-1 9L3 4L-2 1Z" fill="#3c2c1e"/></g>
<circle cx="173" cy="40" r="10" fill="url(#sph)"/>
<g transform="translate(205,40)" fill="url(#tan)"><path d="M-7-12H7C7-4 4 0 1 1V8H5V12H-5V8H-1V1C-4 0-7-4-7-12Z"/></g>
<g transform="translate(238,40)"><circle r="10" fill="url(#sph)"/><g fill="none" stroke="#3c2c1e" stroke-width=".8"><ellipse rx="5" ry="10"/><path d="M-10 0H10M-8-5H8M-8 5H8M0-10V10"/></g></g>
<g transform="translate(270,40)" fill="url(#sph)"><circle cx="-5" cy="-7" r="4"/><circle cx="-3" cy="3" r="5"/><circle cx="6" cy="6" r="5"/><rect x="-8" y="-6" width="6" height="8"/></g>
<g transform="translate(302,40)"><path d="M-2-11L10-6L10 6L1 11L-9 5L-9-5Z" fill="url(#tan)"/><circle r="4" fill="none" stroke="#3c2c1e" stroke-width="2"/></g>
<text x="334" y="51" font-family="Liberation Serif,serif" font-size="28" font-weight="700" text-anchor="middle" fill="url(#tan)">T</text>
<g transform="translate(365,40)" fill="url(#sph)"><circle cx="-2" cy="-9" r="3"/><circle cx="5" cy="-7" r="3"/><circle cx="-7" cy="-4" r="3"/><circle cx="0" cy="-3" r="3"/><circle cx="7" cy="-1" r="3"/><circle cx="-7" cy="3" r="3"/><circle cx="0" cy="4" r="3"/><circle cx="7" cy="6" r="3"/><circle cx="-2" cy="10" r="3"/><circle cx="4" cy="11" r="2.5"/></g>
<g transform="translate(397,40)"><path d="M0-11L11 3L0 11L-10 4Z" fill="url(#tan)"/><path d="M-2-5L4 3L0 7L-4 2Z" fill="#3c2c1e"/></g>
<g transform="translate(429,40)" fill="url(#tan)"><path d="M0-13C7-13 10-7 8-2C7 2 3 3 1 3V12H-1V3C-6 3-9-2-8-6C-7-10-4-13 0-13Z"/></g>
<g transform="translate(462,40)"><path d="M-11 0L-3-8L3-9L11-1V3H-11Z" fill="url(#tan)"/><rect x="-9" y="-1" width="18" height="3" fill="#3c2c1e"/><ellipse cx="0" cy="11" rx="10" ry="2" fill="#5a6074"/></g>
<g transform="translate(494,40)" fill="url(#tan)"><path d="M2-13C3-7 8-5 8 3C8 9 4 12 0 12C-5 12-8 9-8 4C-8-1-4-2-3-6C-2-4-1-3 0-3C2-6 2-10 2-13Z"/></g>
<g transform="translate(526,40)" fill="url(#tan)"><path d="M-10-6L-1-12L5-10L11-3L3 11L-4 8L-11 0Z"/><g fill="#2e2218"><circle cx="-3" cy="-4" r="1.6"/><circle cx="3" cy="-2" r="1.6"/><circle cx="-5" cy="2" r="1.6"/><circle cx="2" cy="4" r="1.6"/></g></g>
<g transform="translate(558,40)"><path d="M-12 1L0-6L12 1L0 12Z" fill="url(#tan)"/><path d="M-9-8L-3 0M-4-11L-1 0M1-12L0 0M5-11L1 0M10-7L3 1" stroke="#d2bea0" stroke-width="1.2" fill="none"/><path d="M-5 2L0-2L5 2L0 7Z" fill="#2e2218"/></g>
<text x="590" y="45" font-family="Liberation Sans,sans-serif" font-size="13" text-anchor="middle" fill="#c7b698" textLength="26">AGr</text>
<g transform="translate(622,40)"><path d="M-12 12L-12 2L0-11L12 2L12 12Z" fill="url(#tan)"/><rect x="-2" y="3" width="5" height="9" fill="#231a12"/><rect x="-8" y="3" width="4" height="5" fill="#fff"/></g>
<rect x="646" y="26" width="11" height="27" rx="5.5" fill="url(#sph)"/>
<g transform="translate(686,40)" fill="url(#tan)"><path d="M-13-7L-9-11L-6-7L-3-11L0-7L3-11L6-7L9-11L13-7C13 5 7 11 0 11C-7 11-13 5-13-7Z"/></g>
<g transform="translate(719,40)" fill="url(#tan)"><path d="M-1-13C3-12 3-8 5-5C9-2 11 2 9 6C6 11-2 13-6 10C-10 7-11 2-8-1C-4-4-4-10-1-13Z"/></g>
<g transform="translate(749,40)"><path d="M3-11L10-6L5 4L-2-1Z" fill="url(#tan)"/><path d="M-2 0L4 5L-4 14L-9 10Z" fill="#8b8a86" opacity=".7"/></g>
<g transform="translate(781,40)"><circle cx="-5" cy="-9" r="3.5" fill="url(#sph)"/><circle cx="2" cy="-9" r="3.5" fill="url(#sph)"/><rect x="-9" y="-5" width="13" height="10" fill="url(#tan)"/><path d="M-7 5L-10 12M0 5L3 12M-3 5V12" stroke="#c8b494" stroke-width="1.4"/><path d="M7-5L12-7M8 0H13M7 4L12 7" stroke="#e0d0b6" stroke-width="1.3"/></g>
<g transform="translate(813,40)" fill="url(#tan)"><circle cy="-9" r="3"/><path d="M-11-2H11V0H-11Z"/><path d="M-11 0H-9V5H-7L-10 10L-13 5H-11ZM-1 0H1V5H3L0 10L-3 5H-1ZM9 0H11V5H13L10 10L7 5H9Z"/></g>
<g transform="translate(845,40)"><circle r="10" fill="url(#sph)"/><circle r="5" fill="#3c2c1e"/><circle r="3" fill="#c8ac88"/></g>
<g transform="translate(877,40)" fill="url(#tan)"><path d="M3-11L7-13L9-9L6-7L-2 8L1 11L-3 14L-5 11L-9 10L-7 6L-4 7L4-8Z"/></g>
<g fill="#f2f4f7"><path d="M183 50L188 53L183 56ZM470 50L475 53L470 56ZM502 50L507 53L502 56ZM534 50L539 53L534 56ZM598 50L603 53L598 56ZM661 50L666 53L661 56ZM725 50L730 53L725 56ZM757 50L762 53L757 56ZM789 50L794 53L789 56ZM821 50L826 53L821 56Z"/></g>
<!-- left tools -->
<g transform="translate(15,87)" fill="url(#tan)"><path d="M-11-11L11 1L4 3L11 10L8 12L1 5L-2 11Z"/></g>
<g transform="translate(15,120)"><path d="M11-11L6 10L0 2L-10 10L-5-3Z" fill="url(#tan)"/><path d="M-5-3L11-11L0 2Z" fill="#1c140d"/></g>
<g transform="translate(15,153)"><path d="M-6-5C-2-11 8-11 11-4C13 3 8 10 0 10C-5 10-10 8-12 4L-6 2C-3 5 3 5 5 1C6-3 3-5-1-4L0 0L-10 0Z" fill="url(#tan)"/></g>
<g transform="translate(15,183)"><ellipse rx="12" ry="7" transform="rotate(-18)" fill="none" stroke="url(#tan)" stroke-width="3"/><circle r="7" fill="url(#sph)"/></g>
<g transform="translate(15,217)"><path d="M-11-9L-7-11L11 9L9 11Z" fill="url(#tan)"/><ellipse cx="-8" cy="-8" rx="3" ry="4" transform="rotate(-45 -8 -8)" fill="#4a3828"/></g>
<g transform="translate(15,249)"><path d="M-11-11L-3-11L12 6L8 11L0 9L-12 0Z" fill="url(#tan)"/><path d="M-7-6L3 5M-3-8L8 6" stroke="#2a1e14" stroke-width="2" fill="none"/></g>
<g fill="url(#tan)">
<path transform="translate(15,301)" d="M0-13L4-8H2V-3H8V-5L13 0L8 5V3H2V8H4L0 13L-4 8H-2V3H-8V5L-13 0L-8-5V-3H-2V-8H-4Z"/>
<path transform="translate(15,333) scale(1.1)" d="M0-13L4-8H2V-3H8V-5L13 0L8 5V3H2V8H4L0 13L-4 8H-2V3H-8V5L-13 0L-8-5V-3H-2V-8H-4Z"/>
<path transform="translate(15,366) scale(1.1,.85)" d="M0-13L4-8H2V-3H8V-5L13 0L8 5V3H2V8H4L0 13L-4 8H-2V3H-8V5L-13 0L-8-5V-3H-2V-8H-4Z"/>
</g>
<ellipse cx="15" cy="333" rx="5" ry="3" fill="#2a1e14"/><ellipse cx="15" cy="302" rx="4" ry="3" fill="#2a1e14"/><ellipse cx="15" cy="365" rx="4" ry="2.5" fill="#2a1e14"/>
<g transform="translate(15,396)"><circle r="13.5" fill="url(#sph)"/><path d="M0-10L3-6H1V-1H6V-3L10 0L6 3V1H1V6H3L0 10L-3 6H-1V1H-6V3L-10 0L-6-3V-1H-1V-6H-3Z" fill="#2e2218"/></g>
<g transform="translate(15,430)"><path d="M-13-10L0-6L13-10V4L0 13L-13 4Z" fill="url(#tan)"/><path d="M-13-10L0-6V3L-13-2Z" fill="#3b2c1f"/><path d="M-8 4L0-1L8 4L0 10Z" fill="#e6d6bc"/></g>
</g>
<path d="M24 403L29 406L24 409Z" fill="#fff"/>
<rect x="2" y="63" width="25" height="1" fill="#141d2e"/><rect x="2" y="275" width="25" height="1" fill="#141d2e"/><rect x="2" y="451" width="25" height="1" fill="#141d2e"/>
<!-- camera -->
<g transform="translate(15,478)" filter="url(#gl)"><path d="M-12-6H-7L-5-9H5L7-6H12V10H-12Z" fill="#f0f2ee"/><circle cy="2" r="5" fill="#8e9688"/></g>
<g transform="translate(15,509)" fill="#97a2b4"><path d="M-10-1L-6 2V-6C-6-8-4-8-4-6V-9C-4-11-2-11-2-9V-10C-2-12 0-12 0-10V-9C0-11 2-11 2-9V-6C2-8 4-8 4-6V3C4 8 1 11-2 11C-6 11-8 8-9 5L-11 1Z"/></g>
<g transform="translate(15,541)" fill="none" stroke="#97a2b4"><circle cx="-2" cy="-3" r="6.5" stroke-width="2.5"/><path d="M3 2L10 9" stroke-width="3.5"/></g>
<path d="M26 510L30 513L26 516ZM26 542L30 545L26 548Z" fill="#1a2232"/>
<!-- top-right -->
<g filter="url(#gl)" fill="none" stroke="#fffbe6" stroke-linecap="round">
<path d="M1573 17L1580 9L1586 6" stroke-width="7"/>
<path d="M1571 13L1575 3M1576 11L1580 0M1581 10L1585 1M1585 10L1590 4" stroke-width="2.4"/>
</g>
<g fill="none" stroke="#aeb6c3" stroke-width="2">
<path d="M1605 20L1604 14L1612 8L1612 3L1620 0M1622 5L1628 1C1627 7 1624 10 1619 10L1613 18L1606 21"/>
<path d="M1638 22L1640 12L1653 1L1663 4L1657 13L1646 21ZM1640 12L1646 21"/>
<path d="M1676 21L1680 13L1694 1L1699 2L1687 15L1681 16Z"/>
<path d="M1712 12L1725 -1L1737 6L1724 20ZM1716 8L1728 16M1720 4L1732 11"/>
</g>
<g fill="none"><path d="M1841 12C1845 6 1853 6 1857 12C1853 18 1845 18 1841 12Z" stroke="#e0e8f2" stroke-width="1.4"/><circle cx="1849" cy="12" r="3" fill="#8fb6dc"/></g>
<rect x="1868" y="8" width="9" height="9" fill="none" stroke="#d8dee6" stroke-width="1.4"/>
<path d="M1892 8L1900 17M1900 8L1892 17" stroke="#f0f3f6" stroke-width="2.4"/>
<!-- view tools -->
<g>
<path d="M1540 65L1546 63L1550 70L1547 78L1542 78Z" fill="#6c7280"/>
<path d="M1560 64H1566V69H1560ZM1563 69V73M1560 73H1566V79H1560Z" fill="none" stroke="#8e96a6" stroke-width="1.4"/>
<path d="M1575 77C1575 70 1580 66 1582 66C1585 66 1590 70 1590 77M1578 77V72M1586 77V72" fill="none" stroke="#6d7585" stroke-width="1.8"/>
<g transform="translate(1604,71)" fill="none" stroke="#fff" stroke-width="1.3"><ellipse rx="7" ry="9"/><path d="M-7 0H7M0-9V9M-5-5H5M-5 5H5" stroke-width="1.2"/></g>
<rect x="1624" y="65" width="11" height="13" fill="#fff" filter="url(#gl)"/>
<g fill="#b4bbc7"><path d="M1639 65H1651V71H1639ZM1639 72H1651V78H1639Z"/><path d="M1656 65H1661V71H1656ZM1663 65H1668V71H1663ZM1656 72H1668V78H1656Z"/><path d="M1672 65H1677V71H1672ZM1678 65H1683V71H1678ZM1672 72H1677V78H1672ZM1678 72H1683V78H1678Z"/><path d="M1688 65H1693V78H1688ZM1694 65H1699V71H1694ZM1694 72H1699V78H1694Z"/></g>
<g fill="none" stroke="#d4d8df" stroke-width="1.2">
<path d="M1712 66L1720 63L1727 66L1726 74L1720 80L1714 74ZM1713 71L1720 68L1726 72M1720 68V80"/>
<path d="M1732 66L1740 63L1748 66L1747 74L1740 80L1734 74ZM1733 71L1740 68L1747 72M1736 66L1744 77"/>
<path d="M1752 66L1760 63L1767 66L1766 74L1760 80L1754 74ZM1755 72L1760 68L1765 72L1760 77Z"/>
<circle cx="1787" cy="71" r="7.5"/><path d="M1787 65L1791 72H1788.5V77H1785.5V72H1783Z" fill="#b8becb" stroke="none"/>
<g stroke="#99a2b1"><circle cx="1807" cy="71" r="7.5" stroke-dasharray="3 2"/><path d="M1803 69L1807 73L1811 69"/></g>
<g stroke="#a4acba"><path d="M1829 63L1837 67V76L1829 80L1821 76V67ZM1821 67L1829 71L1837 67M1829 71V80"/></g>
</g>
<path d="M1850 63L1858 67V76L1850 80L1842 76V67Z" fill="#7c8494"/><path d="M1850 63L1858 67L1850 71L1842 67Z" fill="#a8aeba"/>
<circle cx="1871" cy="71" r="8" fill="url(#wsph)" filter="url(#gl)"/>
<circle cx="1892" cy="71" r="8" fill="#6f7888"/><path d="M1885 74L1897 64M1887 77L1899 68" stroke="#98a0ae" stroke-width="1.5"/>
</g>
</svg>
</div>
</body></html>
